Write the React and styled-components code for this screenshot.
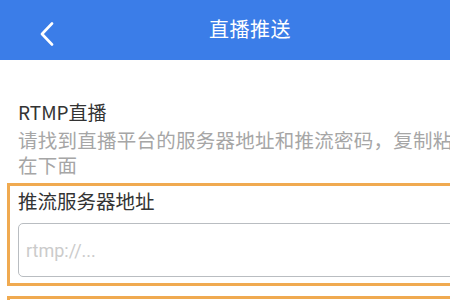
import React from 'react';
import styled, { createGlobalStyle } from 'styled-components';

const GlobalStyle = createGlobalStyle`
  html, body {
    margin: 0;
    padding: 0;
    background: #ffffff;
    overflow: hidden;
  }
  body {
    font-family: "Noto Sans CJK SC", "Noto Sans", sans-serif;
  }
`

const Screen = styled.div`
  width: 500px;
  height: 300px;
  background-color: #ffffff;
  overflow: hidden;
`

const Header = styled.header`
  position: relative;
  height: 60px;
  background-color: #3b7de8;
  display: flex;
  align-items: center;
  justify-content: center;
`

const BackButton = styled.button`
  position: absolute;
  left: 36px;
  top: 19px;
  width: 22px;
  height: 30px;
  padding: 0;
  border: none;
  background: transparent;
  display: flex;
  align-items: center;
  justify-content: center;
`

const Title = styled.h1`
  margin: 0;
  font-size: 20px;
  font-weight: 400;
  color: #ffffff;
  letter-spacing: 0.5px;
  line-height: 26px;
  margin-top: -2px;
`

const Content = styled.main`
  padding: 39px 0 0;
`

const Intro = styled.div`
  padding: 0 18px;
`

const SectionTitle = styled.h2`
  margin: 0;
  font-size: 19px;
  font-weight: 400;
  line-height: 26px;
  color: #333333;
`

const Hint = styled.p`
  margin: 2px 0 0;
  font-size: 19.5px;
  letter-spacing: 0.25px;
  line-height: 25px;
  color: #a6a6a6;
`

const FieldBox = styled.section`
  margin: 6px 7px 0;
  min-height: 40px;
  border: 3px solid #f0aa50;
  padding: 2px 8px 6px;
  & + & {
    margin-top: 10px;
  }
`

const FieldLabel = styled.label`
  display: block;
  font-size: 19.5px;
  line-height: 26px;
  color: #333333;
`

const Input = styled.input`
  display: block;
  box-sizing: border-box;
  width: 100%;
  height: 54px;
  margin-top: 9px;
  padding: 0 7px;
  border: 1.5px solid #b9bdc1;
  border-radius: 5px;
  font-family: "Roboto", "Noto Sans", sans-serif;
  font-size: 18px;
  color: #333333;
  outline: none;
  &::placeholder {
    color: #cbcbcb;
  }
`

const ChevronLeft = () => (
  <svg width="14" height="24" viewBox="0 0 14 24" fill="none">
    <path
      d="M12 1.5 L2 12 L12 22.5"
      stroke="#ffffff"
      strokeWidth="2.6"
      strokeLinecap="round"
      strokeLinejoin="round"
    />
  </svg>
)

const App = () => {
  return (
    <Screen>
      <GlobalStyle />
      <Header>
        <BackButton aria-label="返回">
          <ChevronLeft />
        </BackButton>
        <Title>直播推送</Title>
      </Header>
      <Content>
        <Intro>
          <SectionTitle>RTMP直播</SectionTitle>
          <Hint>请找到直播平台的服务器地址和推流密码，复制粘贴在下面</Hint>
        </Intro>
        <FieldBox>
          <FieldLabel>推流服务器地址</FieldLabel>
          <Input placeholder="rtmp://..." />
        </FieldBox>
        {/* next field, only its top edge is on screen */}
        <FieldBox />
      </Content>
    </Screen>
  )
}

export default App
